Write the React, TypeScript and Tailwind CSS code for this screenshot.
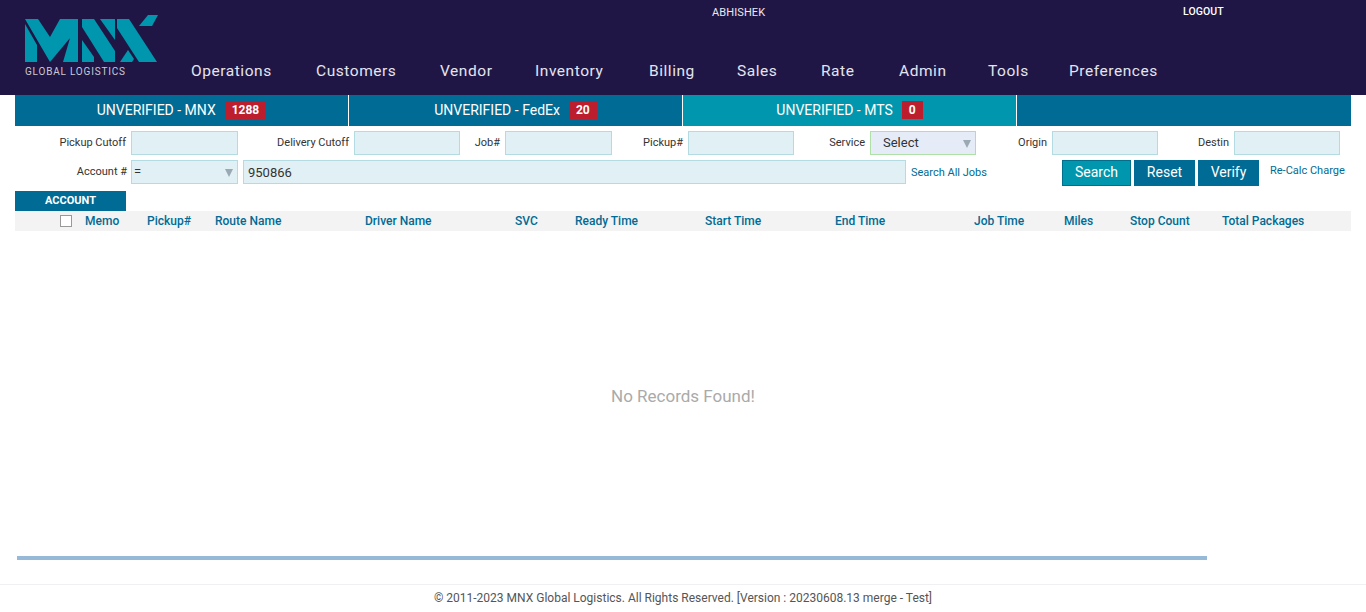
const navItems = [
  { name: "Operations", width: "w-[125px]" },
  { name: "Customers", width: "w-[124px]" },
  { name: "Vendor", width: "w-[95px]" },
  { name: "Inventory", width: "w-[114px]" },
  { name: "Billing", width: "w-[88px]" },
  { name: "Sales", width: "w-[84px]" },
  { name: "Rate", width: "w-[78px]" },
  { name: "Admin", width: "w-[89px]" },
  { name: "Tools", width: "w-[81px]" },
  { name: "Preferences", width: "w-[100px]" },
];

const tabs = [
  { name: "UNVERIFIED - MNX", count: "1288", active: false },
  { name: "UNVERIFIED - FedEx", count: "20", active: false },
  { name: "UNVERIFIED - MTS", count: "0", active: true },
];

const columns = [
  { name: "Memo", width: "w-[62px]" },
  { name: "Pickup#", width: "w-[68px]" },
  { name: "Route Name", width: "w-[150px]" },
  { name: "Driver Name", width: "w-[150px]" },
  { name: "SVC", width: "w-[60px]" },
  { name: "Ready Time", width: "w-[130px]" },
  { name: "Start Time", width: "w-[130px]" },
  { name: "End Time", width: "w-[139px]" },
  { name: "Job Time", width: "w-[90px]" },
  { name: "Miles", width: "w-[66px]" },
  { name: "Stop Count", width: "w-[92px]" },
  { name: "Total Packages", width: "w-[100px]" },
];

const inputClass = "h-6 border border-[#b5dbe2] bg-[#e1f0f4]";

function Logo() {
  return (
    <svg width="134" height="48" viewBox="0 0 134 48" className="block">
      <g fill="#0097ae">
        <polygon points="1,10 13,31 13,48 1,48" />
        <polygon points="1,5 14,5 26,23 36,5 54,5 54,48 39,48 46,24 26,48" />
        <polygon points="58,5 70,5 91,37 91,48 80,48 58,13" />
        <polygon points="58,26 70,43 70,48 58,48" />
        <polygon points="76,5 91,5 91,26" />
        <polygon points="93,5 105,5 133,48 115,48 93,14" />
        <polygon points="96,48 104,36 110,45 108,48" />
        <polygon points="124,1 134,1 128,12 115,12" />
      </g>
    </svg>
  );
}

function Field({ label, labelWidth, inputWidth }: { label: string; labelWidth: string; inputWidth: string }) {
  return (
    <>
      <label className={`${labelWidth} pr-[5px] text-right text-[11px] leading-6 text-[#333]`}>{label}</label>
      <div className={`${inputWidth} ${inputClass}`}></div>
    </>
  );
}

export default function App() {
  return (
    <div className="flex h-[612px] flex-col overflow-hidden bg-white font-['Roboto',sans-serif]">
      <header className="flex h-[95px] shrink-0 bg-[#1f1646]">
        <div className="w-[191px] shrink-0 pl-6 pt-[14px]">
          <Logo />
          <div className="ml-[1px] mt-[4px] text-[10px] leading-3 tracking-[0.8px] text-[#c9c9d4]">GLOBAL LOGISTICS</div>
        </div>
        <div className="flex-1">
          <div className="relative h-[61px]">
            <span className="absolute left-[521px] top-[7px] text-[11px] leading-3 tracking-[0.1px] text-[#e8e8f0]">ABHISHEK</span>
            <span className="absolute left-[992px] top-[6px] text-[10.5px] leading-3 font-medium tracking-[0.1px] text-white">LOGOUT</span>
          </div>
          <nav className="flex">
            {navItems.map((item) => (
              <a key={item.name} className={`${item.width} text-[15.5px] leading-5 tracking-[0.55px] text-[#e4e4ee]`}>
                {item.name}
              </a>
            ))}
          </nav>
        </div>
      </header>

      <div className="flex flex-1 flex-col px-[15px]">
        <div className="flex h-[31px] bg-[#006b94]">
          {tabs.map((tab) => (
            <div
              key={tab.name}
              className={`flex w-[334px] items-center justify-center gap-[9px] border-r border-white pb-[1px] text-sm text-white ${tab.active ? "bg-[#0097ae]" : ""}`}
            >
              {tab.name}
              <span className="bg-[#bd1e2e] px-[7px] text-xs leading-[18px] font-bold">{tab.count}</span>
            </div>
          ))}
        </div>

        <div className="mt-[5px] flex">
          <Field label="Pickup Cutoff" labelWidth="w-[116px]" inputWidth="w-[107px]" />
          <Field label="Delivery Cutoff" labelWidth="w-[116px]" inputWidth="w-[106px]" />
          <Field label="Job#" labelWidth="w-[45px]" inputWidth="w-[107px]" />
          <Field label="Pickup#" labelWidth="w-[76px]" inputWidth="w-[106px]" />
          <label className="w-[76px] pr-[5px] text-right text-[11px] leading-6 text-[#333]">Service</label>
          <div className="flex h-6 w-[106px] items-center justify-between border border-[#aee0a8] bg-[#e6ecf7] pl-3 pr-[4px] text-[13px] text-[#333]">
            Select
            <span className="mt-[1px] h-0 w-0 border-x-[4px] border-t-[8px] border-x-transparent border-t-[#9aa9b3]"></span>
          </div>
          <Field label="Origin" labelWidth="w-[76px]" inputWidth="w-[106px]" />
          <Field label="Destin" labelWidth="w-[76px]" inputWidth="w-[106px]" />
        </div>

        <div className="mt-[5px] flex h-[26px]">
          <label className="w-[116px] pr-1 text-right text-[11px] leading-6 text-[#333]">Account #</label>
          <div className={`flex w-[107px] items-center justify-between pl-[2px] pr-[4px] text-[13px] text-[#333] ${inputClass}`}>
            =
            <span className="mt-[1px] h-0 w-0 border-x-[4px] border-t-[8px] border-x-transparent border-t-[#9aa9b3]"></span>
          </div>
          <div className={`ml-[5px] w-[663px] pl-[4px] text-[13px] leading-[23px] text-[#333] ${inputClass}`}>950866</div>
          <a className="ml-[5px] w-[151px] pt-[1px] text-[11px] leading-6 text-[#006b94]">Search All Jobs</a>
          <button className="h-[26px] w-[69px] border border-[#00708f] bg-[#0097ae] pb-[2px] text-sm text-white">Search</button>
          <button className="ml-[3px] h-[26px] w-[61px] bg-[#006b94] pb-[2px] text-sm text-white">Reset</button>
          <button className="ml-[3px] h-[26px] w-[61px] bg-[#006b94] pb-[2px] text-sm text-white">Verify</button>
          <a className="ml-[11px] pt-[1px] text-[11px] leading-5 text-[#006b94]">Re-Calc Charge</a>
        </div>

        <div className="mt-[5px] flex h-5 w-[111px] items-center justify-center bg-[#006b94] text-[11px] font-bold text-white">
          ACCOUNT
        </div>
        <div className="flex h-5 items-center bg-[#f3f3f3] pl-[45px] text-xs font-medium text-[#006b94]">
          <span className="mr-[13px] h-3 w-3 border border-[#999] bg-white"></span>
          {columns.map((col) => (
            <span key={col.name} className={col.width}>{col.name}</span>
          ))}
        </div>

        <div className="flex h-[325px] items-center justify-center pt-[6px] text-[17px] text-[#aaa]">No Records Found!</div>
        <div className="ml-[2px] h-1 w-[1190px] bg-[#97b9d8]"></div>
      </div>

      <footer className="h-[28px] shrink-0 border-t border-[#f0f0f4] pt-[6px] text-center text-xs leading-[14px] text-[#555]">
        © 2011-2023 MNX Global Logistics. All Rights Reserved. [Version : 20230608.13 merge - Test]
      </footer>
    </div>
  );
}
